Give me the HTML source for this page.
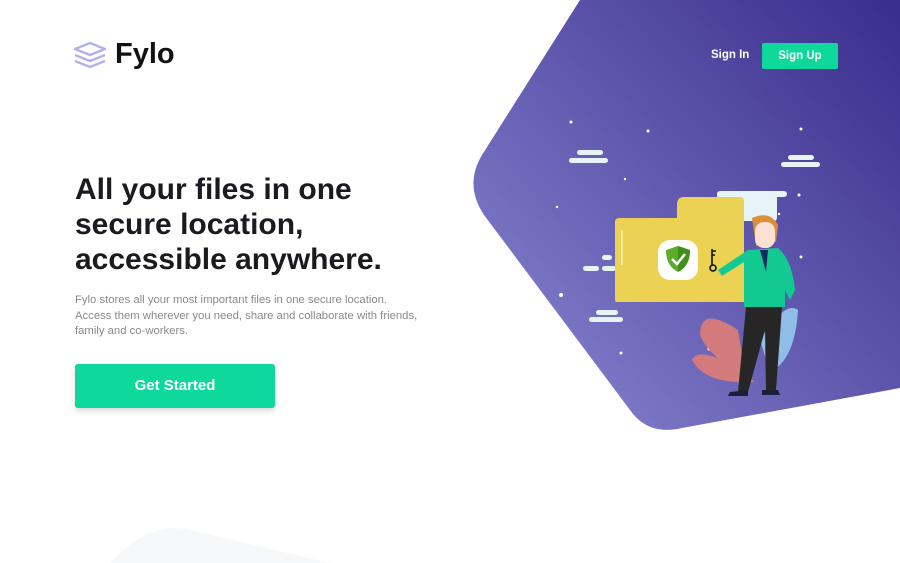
<!DOCTYPE html>
<html><head><meta charset="utf-8"><style>
*{margin:0;padding:0;box-sizing:border-box}
body{width:900px;height:563px;overflow:hidden;background:#fff;font-family:"Liberation Sans",sans-serif;position:relative}
.abs{position:absolute}
h1{position:absolute;left:75px;top:172px;font-size:30px;line-height:35px;font-weight:700;color:#1a1a20;letter-spacing:0px}
p.d{position:absolute;left:75px;top:293px;width:345px;font-size:11.3px;line-height:15.5px;color:#8a8a8a}
.btn{position:absolute;left:75px;top:364px;width:200px;height:44px;background:#0fd89d;border-radius:3px;color:#fff;font-weight:700;font-size:15px;text-align:center;line-height:44px;box-shadow:0 3px 6px rgba(0,0,0,.15)}
.nav{position:absolute;color:#fff;font-size:11.5px;font-weight:700}
</style></head><body>
<svg class="abs" style="left:0;top:0" width="900" height="563" viewBox="0 0 900 563">
<defs><linearGradient id="g" x1="470" y1="420" x2="900" y2="20" gradientUnits="userSpaceOnUse">
<stop offset="0" stop-color="#8b87d2"/><stop offset="1" stop-color="#3a2f8e"/></linearGradient></defs>
<path d="M580 0 L482 155 Q464 185 484 215 L630 410 Q648 436 682 428 L900 388 L900 0 Z" fill="url(#g)"/>
<path d="M110 563 Q150 520 190 530 L330 563 Z" fill="#f7f8fa"/>
<g fill="#e6f3f7">
<rect x="577" y="150" width="26" height="5" rx="2.5"/><rect x="569" y="158" width="39" height="5" rx="2.5"/>
<rect x="788" y="155" width="26" height="5" rx="2.5"/><rect x="781" y="162" width="39" height="5" rx="2.5"/>
<rect x="596" y="310" width="22" height="5" rx="2.5"/><rect x="589" y="317" width="34" height="5" rx="2.5"/>
<rect x="717" y="191" width="60" height="30" rx="3"/><rect x="765" y="191" width="22" height="6" rx="3"/>
<rect x="583" y="266" width="16" height="5" rx="2.5"/><rect x="602" y="266" width="14" height="5" rx="2.5"/><rect x="602" y="255" width="10" height="5" rx="2.5"/>
</g>
<g fill="#fff"><circle cx="571" cy="122" r="1.5"/><circle cx="648" cy="131" r="1.5"/><circle cx="625" cy="179" r="1.2"/><circle cx="561" cy="295" r="2"/><circle cx="801" cy="257" r="1.5"/><circle cx="779" cy="214" r="1.2"/><circle cx="557" cy="207" r="1.2"/><circle cx="801" cy="129" r="1.5"/><circle cx="799" cy="195" r="1.5"/><circle cx="621" cy="353" r="1.5"/><circle cx="709" cy="349" r="1.5"/></g>
<path d="M677 205 Q677 197 684 197 L740 197 Q744 197 744 202 L744 302 L616 302 Q615 302 615 298 L615 222 Q615 218 620 218 L677 218 Z" fill="#ecd252"/>
<rect x="621" y="230" width="1.5" height="35" fill="#fff" opacity=".7"/>
<rect x="658" y="240" width="40" height="40" rx="12" fill="#fff"/>
<path d="M678 246 L690 250 Q690 266 678 272 Q666 266 666 250 Z" fill="#5aad2a"/>
<path d="M678 246 L690 250 Q690 266 678 272 Z" fill="#3f8f1a"/>
<path d="M672 259 L677 264 L685 254" stroke="#fff" stroke-width="2.5" fill="none"/>
<path d="M712 249 L712 266 M712 251 L716 251 M712 255 L715 255" stroke="#111" stroke-width="1.6" fill="none"/><circle cx="713" cy="268" r="3" stroke="#111" stroke-width="1.6" fill="none"/>
<path d="M738 330 Q700 305 700 335 Q710 360 745 372 Z" fill="#d37a7c"/>
<path d="M740 370 Q700 345 692 360 Q705 385 755 382 Z" fill="#d37a7c"/>
<path d="M760 340 Q785 300 798 310 Q795 360 770 372 Z" fill="#90bde8"/>
<path d="M752 218 Q770 210 778 225 L776 242 L756 246 Z" fill="#d98f3b"/>
<rect x="755" y="222" width="20" height="26" rx="9" fill="#fbe0d4"/>
<path d="M748 250 L778 248 Q792 260 795 290 L790 300 L785 290 L785 307 L744 307 L744 262 L722 276 L718 270 Z" fill="#12c991"/>
<path d="M760 250 L766 272 L768 250 Z" fill="#0f2d5e"/>
<path d="M746 307 L782 307 L776 390 L766 390 L765 330 L748 392 L738 392 Z" fill="#262626"/>
<path d="M730 392 L748 390 L748 396 L728 396 Z M762 390 L778 390 L780 395 L762 395 Z" fill="#1a1f3a"/>
</svg>
<svg class="abs" style="left:72px;top:40px" width="36" height="30" viewBox="0 0 36 30">
<g fill="none" stroke="#b3b0f0" stroke-width="2.4" stroke-linejoin="round"><path d="M3 9 L18 3 L33 9 L18 15 Z"/><path d="M3 15 L18 21 L33 15"/><path d="M3 21 L18 27 L33 21"/></g></svg>
<div class="abs" style="left:115px;top:38px;font-size:29px;font-weight:700;color:#111">Fylo</div>
<div class="nav" style="left:711px;top:49px">Sign In</div>
<div class="abs" style="left:762px;top:43px;width:76px;height:26px;background:#0fd89d;border-radius:2px;color:#fff;font-size:11.5px;font-weight:700;text-align:center;line-height:26px">Sign Up</div>
<h1>All your files in one<br>secure location,<br>accessible anywhere.</h1>
<p class="d">Fylo stores all your most important files in one secure location.<br>Access them wherever you need, share and collaborate with friends,<br>family and co-workers.</p>
<div class="btn">Get Started</div>
</body></html>
